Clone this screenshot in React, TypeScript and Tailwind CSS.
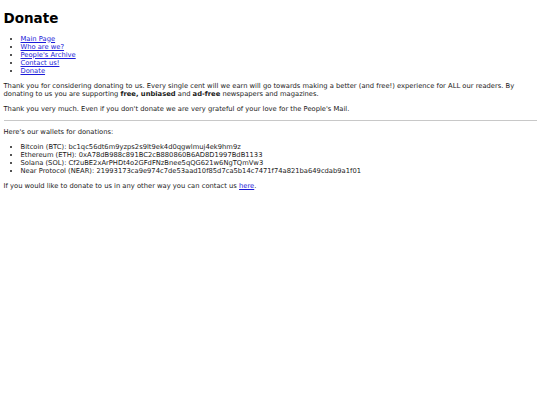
import React from 'react';

const links = ['Main Page', 'Who are we?', "People's Archive", 'Contact us!', 'Donate'];

const wallets = [
  ['Bitcoin (BTC)', 'bc1qc56dt6m9yzps2s9lt9ek4d0qgwlmuj4ek9hm9z'],
  ['Ethereum (ETH)', '0xA78dB988c891BC2cB880860B6AD8D1997BdB1133'],
  ['Solana (SOL)', 'Cf2uBE2xArPHDt4o2GFdFNzBnee5qQG621w6NgTQmVw3'],
  ['Near Protocol (NEAR)', '21993173ca9e974c7de53aad10f85d7ca5b14c7471f74a821ba649cdab9a1f01'],
];

export default function App() {
  return (
    <div className="min-h-[405px] bg-white px-[3.5px] pt-[1.5px] text-[6.75px] leading-[8px] text-[#1a1a1a] font-['DejaVu_Sans',sans-serif]">
      <h1 className="mt-[8px] mb-[9px] text-[13.5px] leading-[16px] font-bold text-black">Donate</h1>

      <ul className="my-[7px] list-disc pl-[17px]">
        {links.map((l) => (
          <li key={l}>
            <a href="#" className="text-[#1c1cd8] underline">{l}</a>
          </li>
        ))}
      </ul>

      <p className="my-[7px]">
        Thank you for considering donating to us. Every single cent will we earn will go towards making a better (and free!)
        experience for ALL our readers. By donating to us you are supporting <b>free, unbiased</b> and <b>ad-free</b>{' '}
        newspapers and magazines.
      </p>
      <p className="my-[7px]">
        Thank you very much. Even if you don't donate we are very grateful of your love for the People's Mail.
      </p>

      <hr className="my-[3.5px] border-t border-[#c8c8c8]" />

      <p className="my-[7px]">Here's our wallets for donations:</p>
      <ul className="my-[7px] list-disc pl-[17px]">
        {wallets.map(([name, addr]) => (
          <li key={name}>
            {name}: {addr}
          </li>
        ))}
      </ul>
      <p className="my-[7px]">
        If you would like to donate to us in any other way you can contact us{' '}
        <a href="#" className="text-[#1c1cd8] underline">here</a>.
      </p>
    </div>
  );
}
